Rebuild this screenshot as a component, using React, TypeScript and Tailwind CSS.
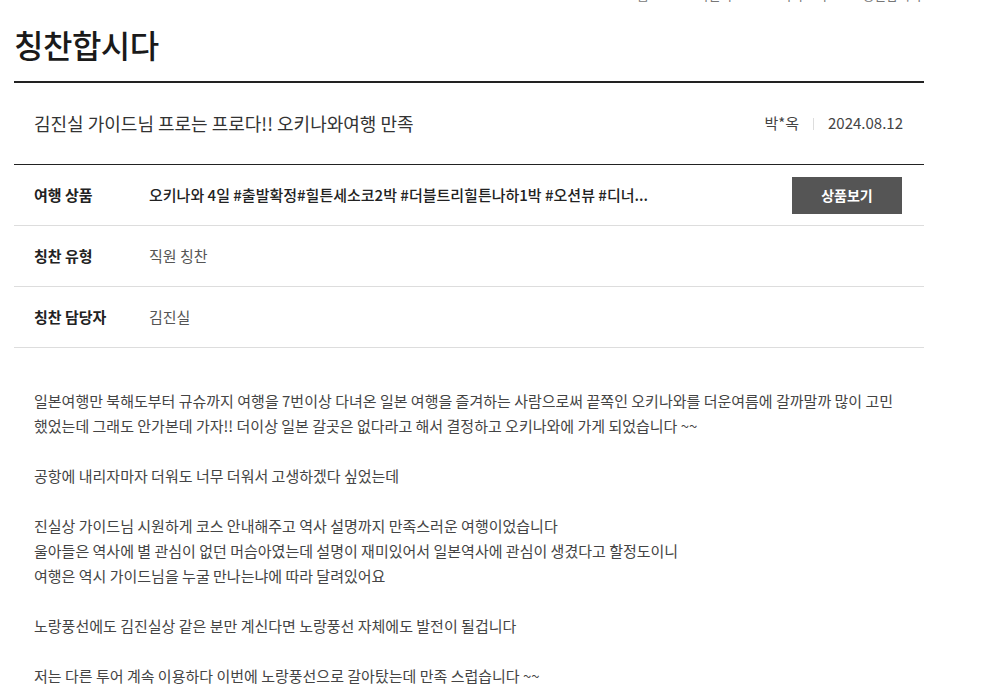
import { Fragment } from "react";

const font = { fontFamily: '"Noto Sans CJK KR", "Noto Sans", sans-serif' };

const infoRows = [
  { label: "여행 상품", value: "오키나와 4일 #출발확정#힐튼세소코2박 #더블트리힐튼나하1박 #오션뷰 #디너...", product: true },
  { label: "칭찬 유형", value: "직원 칭찬" },
  { label: "칭찬 담당자", value: "김진실" },
];

const paragraphs = [
  [
    "일본여행만 북해도부터 규슈까지 여행을 7번이상 다녀온 일본 여행을 즐겨하는 사람으로써 끝쪽인 오키나와를 더운여름에 갈까말까 많이 고민했었는데 그래도 안가본데 가자!! 더이상 일본 갈곳은 없다라고 해서 결정하고 오키나와에 가게 되었습니다 ~~",
  ],
  ["공항에 내리자마자 더워도 너무 더워서 고생하겠다 싶었는데"],
  [
    "진실상 가이드님 시원하게 코스 안내해주고 역사 설명까지 만족스러운 여행이었습니다",
    "울아들은 역사에 별 관심이 없던 머슴아였는데 설명이 재미있어서 일본역사에 관심이 생겼다고 할정도이니",
    "여행은 역시 가이드님을 누굴 만나는냐에 따라 달려있어요",
  ],
  ["노랑풍선에도 김진실상 같은 분만 계신다면 노랑풍선 자체에도 발전이 될겁니다"],
  ["저는 다른 투어 계속 이용하다 이번에 노랑풍선으로 갈아탔는데 만족 스럽습니다 ~~"],
];

export default function App() {
  return (
    <div style={font} className="min-h-[695px] overflow-hidden bg-white">
      <div className="mx-[14px] w-[910px]">
        {/* breadcrumb, mostly scrolled off the top */}
        <div className="-mt-[14px] flex h-[18px] items-center justify-end gap-[14px] pr-[2px] text-[13px] leading-[18px] text-[#777]">
          <span>홈</span>
          <span className="text-[#ccc]">&gt;</span>
          <span>고객센터</span>
          <span className="text-[#ccc]">&gt;</span>
          <span>고객의소리</span>
          <span className="text-[#ccc]">&gt;</span>
          <span>칭찬합시다</span>
        </div>

        <h1 className="mt-[16px] text-[32px] font-medium leading-[48px] tracking-[-0.5px] text-[#1a1a1a]">
          칭찬합시다
        </h1>

        <div className="mt-[13px] border-t-2 border-[#222]">
          <div className="flex h-[81px] items-center justify-between pl-[20px] pr-[21px]">
            <p className="text-[18px] text-[#333]">
              김진실 가이드님 프로는 프로다!! 오키나와여행 만족
            </p>
            <div className="flex items-center text-[15px] text-[#444]">
              <span>박*옥</span>
              <span className="mx-[14px] h-[12px] w-px bg-[#ddd]" />
              <span>2024.08.12</span>
            </div>
          </div>

          <div className="border-t border-[#222]">
            {infoRows.map((row) => (
              <div
                key={row.label}
                className="flex h-[61px] items-center border-b border-[#ddd] pl-[20px] pr-[22px] text-[15px]"
              >
                <span className="w-[115px] shrink-0 font-semibold text-[#222]">{row.label}</span>
                {row.product ? (
                  <>
                    <span className="flex-1 truncate font-medium text-[#222]">{row.value}</span>
                    <button className="ml-[40px] h-[37px] w-[110px] bg-[#555] text-[14px] font-bold text-white">
                      상품보기
                    </button>
                  </>
                ) : (
                  <span className="text-[#555]">{row.value}</span>
                )}
              </div>
            ))}
          </div>

          <div className="px-[20px] pt-[40px] text-[15px] leading-[25px] text-[#444]">
            {paragraphs.map((lines, i) => (
              <Fragment key={i}>
                {i > 0 && <div className="h-[25px]" />}
                {lines.map((line) => (
                  <p key={line}>{line}</p>
                ))}
              </Fragment>
            ))}
          </div>
        </div>
      </div>
    </div>
  );
}
